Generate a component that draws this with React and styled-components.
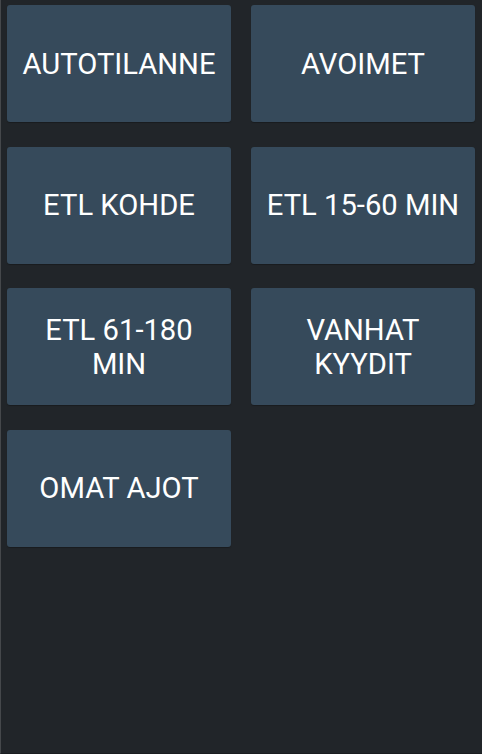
import React from 'react';
import styled, { createGlobalStyle } from 'styled-components';

const GlobalStyle = createGlobalStyle`
  html, body {
    margin: 0;
    padding: 0;
    background-color: #212529;
  }
`;

const Screen = styled.div`
  box-sizing: border-box;
  width: 482px;
  height: 754px;
  background-color: #212529;
  border-left: 1px solid #45484b;
  border-bottom: 1px solid #1a1d20;
  padding: 5px 7px 0 6px;
  font-family: Roboto, "Noto Sans", sans-serif;
`;

const Grid = styled.div`
  display: grid;
  grid-template-columns: 224px 224px;
  grid-auto-rows: 117px;
  column-gap: 20px;
  row-gap: 24.5px;
`;

const Tile = styled.button`
  appearance: none;
  border: none;
  border-radius: 3px;
  background-color: #364a5b;
  box-shadow: 0 1px 1px rgba(0, 0, 0, 0.25);
  color: #ffffff;
  font-family: Roboto, "Noto Sans", sans-serif;
  font-size: 29.2px;
  line-height: 34px;
  text-transform: uppercase;
  text-align: center;
  padding: 0 12px;
  cursor: pointer;

  &:focus {
    outline: none;
  }
`;

const tiles = [
  'Autotilanne',
  'Avoimet',
  'ETL kohde',
  'ETL 15-60 min',
  'ETL 61-180 min',
  'Vanhat kyydit',
  'Omat ajot',
];

function App() {
  return (
    <>
      <GlobalStyle />
      <Screen>
        <Grid>
          {tiles.map((label) => (
            <Tile key={label}>{label}</Tile>
          ))}
        </Grid>
      </Screen>
    </>
  );
}

export default App;
